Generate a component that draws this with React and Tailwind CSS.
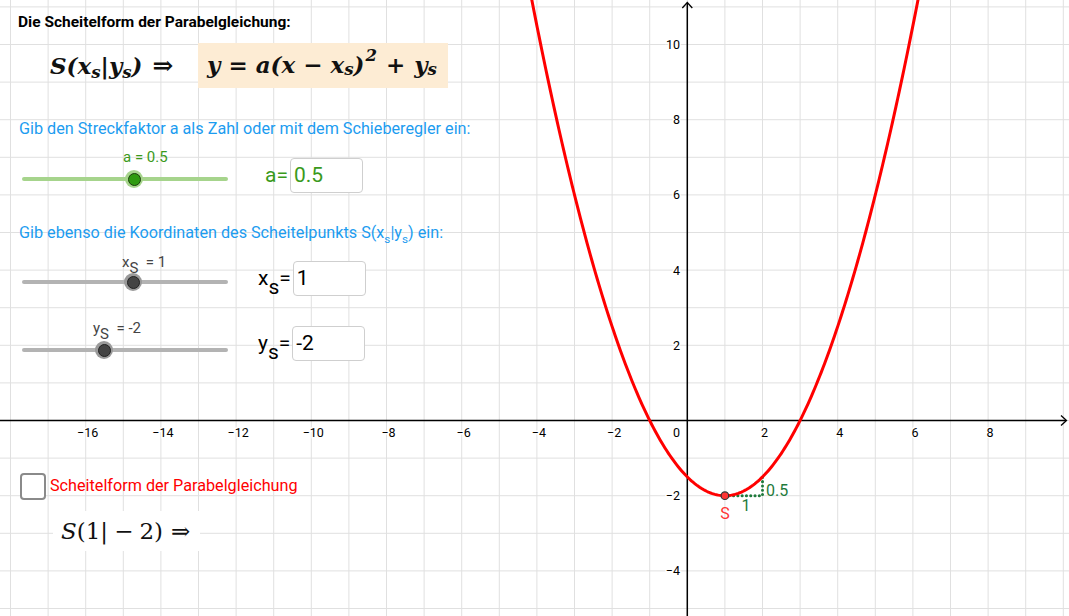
import React from 'react';

// GeoGebra-like applet: vertex form of a parabola
const U = 37.6;
const OX = 687.3;
const OY = 420.5;
const px = (x) => OX + x * U;
const py = (y) => OY - y * U;

const parabola = () => {
  let d = '';
  for (let i = 0; i <= 240; i++) {
    const x = -4.3 + (i * 10.6) / 240;
    const y = 0.5 * (x - 1) * (x - 1) - 2;
    d += `${i === 0 ? 'M' : 'L'}${px(x).toFixed(2)},${py(y).toFixed(2)} `;
  }
  return d;
};

const Graph = () => {
  const vx = [];
  for (let k = -18; k <= 10; k++) vx.push(px(k));
  const hy = [];
  for (let k = -5; k <= 11; k++) hy.push(py(k));
  const xLabels = [-16, -14, -12, -10, -8, -6, -4, -2, 2, 4, 6, 8];
  const yLabels = [10, 8, 6, 4, 2, -2, -4];
  const fmt = (n) => (n < 0 ? `\u2212${-n}` : `${n}`);

  return (
    <svg className="absolute inset-0" width="1069" height="616" viewBox="0 0 1069 616">
      {/* grid */}
      {vx.map((x) => (
        <line key={'v' + x} x1={x} y1="0" x2={x} y2="616" stroke="#e0e0e0" strokeWidth="1" />
      ))}
      {hy.map((y) => (
        <line key={'h' + y} x1="0" y1={y} x2="1069" y2={y} stroke="#e0e0e0" strokeWidth="1" />
      ))}

      {/* axes */}
      <line x1="0" y1={OY} x2="1066" y2={OY} stroke="#000" strokeWidth="1.5" />
      <path d={`M1061,${OY - 5} L1066.5,${OY} L1061,${OY + 5}`} fill="none" stroke="#000" strokeWidth="1.3" />
      <line x1={OX} y1="616" x2={OX} y2="3" stroke="#000" strokeWidth="1.5" />
      <path d={`M${OX - 5},8 L${OX},2.5 L${OX + 5},8`} fill="none" stroke="#000" strokeWidth="1.3" />

      {/* axis labels */}
      <g fontFamily="Roboto, 'Liberation Sans', sans-serif" fontSize="12.5" fill="#000">
        {xLabels.map((n) => (
          <text key={'x' + n} x={px(n) + 2} y="437" textAnchor="middle" stroke="#fff" strokeWidth="3" paintOrder="stroke">
            {fmt(n)}
          </text>
        ))}
        <text x="680" y="437" textAnchor="end" stroke="#fff" strokeWidth="3" paintOrder="stroke">0</text>
        {yLabels.map((n) => (
          <text key={'y' + n} x="680" y={py(n) + 4.5} textAnchor="end" stroke="#fff" strokeWidth="3" paintOrder="stroke">
            {fmt(n)}
          </text>
        ))}
      </g>

      {/* slope triangle */}
      <path
        d={`M${px(1)},${py(-2)} L${px(2)},${py(-2)} L${px(2)},${py(-1.5)}`}
        fill="none"
        stroke="#1f7a3c"
        strokeWidth="3"
        strokeDasharray="0.1 4.2"
        strokeLinecap="round"
      />

      {/* parabola */}
      <path d={parabola()} fill="none" stroke="#ff0000" strokeWidth="3" strokeLinejoin="round" />

      {/* vertex */}
      <circle cx={px(1)} cy={py(-2)} r="3.8" fill="#ff3333" stroke="#333" strokeWidth="1.2" />

      <g fontFamily="Roboto, 'Liberation Sans', sans-serif" fontSize="16">
        <text x={px(1)} y="519" textAnchor="middle" fill="#ff3333">S</text>
        <text x="746" y="511" textAnchor="middle" fill="#1f7a3c">1</text>
        <text x="766" y="496" fill="#1f7a3c">0.5</text>
      </g>
    </svg>
  );
};

const Sub = ({ children, className = '' }) => (
  <span className={`relative text-[0.72em] ${className}`}>{children}</span>
);

const Slider = ({ label, knobX, labelTop, trackY, green }) => (
  <div className="relative w-[236px] shrink-0 h-full">
    <div
      className={`absolute text-[15px] leading-[16px] whitespace-nowrap ${green ? 'text-[#3a9a1c]' : 'text-[#444]'}`}
      style={{ left: knobX - 11, top: labelTop }}
    >
      {label}
    </div>
    <div
      className={`absolute left-[22px] w-[206px] h-[4px] rounded-full ${green ? 'bg-[#a6d48c]' : 'bg-[#b3b3b3]'}`}
      style={{ top: trackY - 2 }}
    />
    <div
      className={`absolute w-[18px] h-[18px] rounded-full ${green ? 'bg-[#a6d48c]' : 'bg-[#9a9a9a]'}`}
      style={{ left: knobX - 9, top: trackY - 9 }}
    />
    <div
      className={`absolute w-[13px] h-[13px] rounded-full border ${green ? 'bg-[#2f9a10] border-[#1a3d0a]' : 'bg-[#444] border-[#222]'}`}
      style={{ left: knobX - 6.5, top: trackY - 6.5 }}
    />
  </div>
);

const InputBox = ({ value, green }) => (
  <div
    className={`w-[73px] h-[35px] rounded-[4px] border border-[#cfcfcf] bg-white pl-[3px] flex items-center text-[21px] leading-none ${
      green ? 'text-[#3a9a1c]' : 'text-black'
    }`}
  >
    {value}
  </div>
);

const mathFont = { fontFamily: "'DejaVu Serif', 'Liberation Serif', serif" };

export default function App() {
  return (
    <div className="relative w-[1069px] h-[616px] overflow-hidden bg-white font-[Roboto,'Liberation_Sans',sans-serif]">
      <Graph />

      <div className="relative flex flex-col">
        {/* title */}
        <div className="pt-[12px] pl-[18px] h-[31px] text-[15.5px] leading-[20px] font-bold text-black">
          Die Scheitelform der Parabelgleichung:
        </div>

        {/* general formula */}
        <div className="mt-[12px] h-[45px] flex items-center" style={mathFont}>
          <div className="pl-[50px] w-[198px] text-[23px] font-bold italic text-[#111] whitespace-nowrap">
            S(x<Sub className="top-[4px]">s</Sub>|y<Sub className="top-[4px]">s</Sub>)
            <span className="not-italic ml-[10px] text-[25px]">⇒</span>
          </div>
          <div className="w-[250px] h-[45px] bg-[#fdecd4] flex items-center pl-[9px] text-[23px] font-bold italic text-[#111] whitespace-nowrap">
            y<span className="not-italic mx-[8px]">=</span>a(x<span className="not-italic mx-[8px]">−</span>x<Sub className="top-[4px]">s</Sub>)
            <Sub className="-top-[10px] ml-[1px]">2</Sub>
            <span className="not-italic mx-[9px]">+</span>y<Sub className="top-[4px]">s</Sub>
          </div>
        </div>

        {/* instruction 1 */}
        <div className="mt-[30px] pl-[19px] h-[21px] text-[16.2px] leading-[21px] text-[#1c9cf0] whitespace-nowrap">
          Gib den Streckfaktor a als Zahl oder mit dem Schieberegler ein:
        </div>

        {/* slider a */}
        <div className="h-[59px] flex">
          <Slider green label="a = 0.5" knobX={134} labelTop={10} trackY={40} />
          <div className="mt-[19px] h-[35px] flex items-center pl-[29px]">
            <span className="text-[21px] text-[#3a9a1c] mr-[2px]">a=</span>
            <InputBox green value="0.5" />
          </div>
        </div>

        {/* instruction 2 */}
        <div className="mt-[24px] pl-[19px] h-[21px] text-[16.2px] leading-[21px] text-[#1c9cf0] whitespace-nowrap">
          Gib ebenso die Koordinaten des Scheitelpunkts S(x<Sub className="top-[5px]">s</Sub>|y<Sub className="top-[5px]">s</Sub>) ein:
        </div>

        {/* slider x_s */}
        <div className="h-[60px] flex">
          <Slider
            label={<>x<span className="relative top-[6px]">S</span> &nbsp;= 1</>}
            knobX={133}
            labelTop={11}
            trackY={39}
          />
          <div className="mt-[18px] h-[35px] flex items-center pl-[22px]">
            <span className="text-[21px] text-black mr-[2px]">x<span className="relative top-[9px]">s</span>=</span>
            <InputBox value="1" />
          </div>
        </div>

        {/* slider y_s */}
        <div className="h-[63px] flex">
          <Slider
            label={<>y<span className="relative top-[6px]">S</span> &nbsp;= -2</>}
            knobX={104}
            labelTop={17}
            trackY={47}
          />
          <div className="mt-[23px] h-[35px] flex items-center pl-[22px]">
            <span className="text-[21px] text-black mr-[2px]">y<span className="relative top-[9px]">s</span>=</span>
            <InputBox value="-2" />
          </div>
        </div>

        {/* checkbox */}
        <div className="mt-[107px] h-[27px] flex items-center pl-[20px]">
          <div className="w-[26px] h-[27px] rounded-[4px] border-2 border-[#8a8a8a] bg-white" />
          <span className="ml-[4px] text-[16.2px] text-[#ff0000] whitespace-nowrap">Scheitelform der Parabelgleichung</span>
        </div>

        {/* concrete vertex */}
        <div className="mt-[11px] ml-[53px] w-[147px] h-[40px] bg-white flex items-center pl-[8px] text-[23px] text-[#111] whitespace-nowrap" style={mathFont}>
          <span className="italic">S</span>(1|<span className="mx-[6px]">−</span>2)<span className="ml-[8px]">⇒</span>
        </div>
      </div>
    </div>
  );
}
